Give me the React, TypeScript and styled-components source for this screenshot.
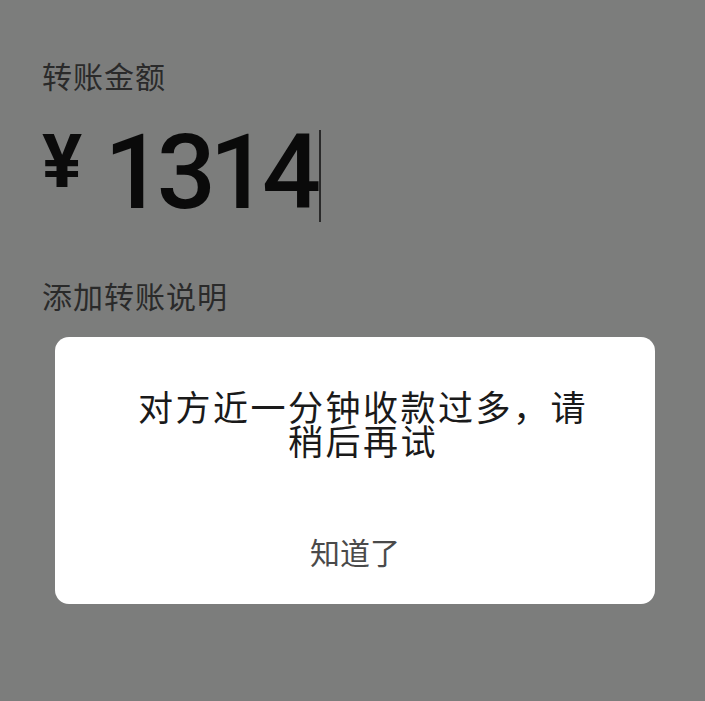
import React from "react";
import styled, { createGlobalStyle } from "styled-components";

const GlobalStyle = createGlobalStyle`
  html, body {
    margin: 0;
    padding: 0;
    background: #f8faf8;
  }
  * { box-sizing: border-box; }
`;

const CJK = `"Noto Sans CJK SC", "Noto Sans", sans-serif`;

const Page = styled.div`
  min-height: 701px;
  padding: 60px 0 0 42px;
  background: #f8faf8;
  font-family: ${CJK};
`;

const Label = styled.div<{ $gap?: number }>`
  font-size: 30px;
  line-height: 30px;
  letter-spacing: 1px;
  color: #555;
  margin-top: ${(p) => p.$gap ?? 0}px;
`;

const AmountRow = styled.div`
  display: flex;
  align-items: flex-start;
  margin-top: 31px;
  height: 104px;
`;

const Yen = styled.span`
  font-family: Roboto, "Liberation Sans", sans-serif;
  font-weight: 700;
  font-size: 75px;
  line-height: 1;
  margin-top: 3px;
  color: #161616;
`;

const Digits = styled.span`
  font-family: Roboto, "Liberation Sans", sans-serif;
  font-weight: 500;
  font-size: 104px;
  line-height: 1;
  letter-spacing: -6.5px;
  margin-left: 22px;
  color: #141414;
`;

const Caret = styled.span`
  display: block;
  width: 2px;
  height: 92px;
  margin-top: 9px;
  margin-left: 4px;
  background: #555;
`;

const Overlay = styled.div`
  position: fixed;
  inset: 0;
  background: rgba(0, 0, 0, 0.5);
  display: flex;
  justify-content: center;
  align-items: flex-start;
  padding: 337px 0 0 5px;
`;

const Dialog = styled.div`
  width: 600px;
  background: #fff;
  border-radius: 14px;
  padding: 52px 64px 0 80px;
  display: flex;
  flex-direction: column;
  align-items: stretch;
  font-family: ${CJK};
`;

const Message = styled.div`
  font-size: 35px;
  line-height: 34px;
  letter-spacing: 2.5px;
  color: #1a1a1a;
  text-align: center;
`;

const ActionButton = styled.button`
  display: block;
  border: 0;
  background: transparent;
  padding: 79px 0 38px;
  margin: 0 -64px 0 -80px;
  font-family: ${CJK};
  font-size: 30px;
  line-height: 30px;
  color: #4a4a4a;
  text-align: center;
  cursor: pointer;
`;

export default function App() {
  return (
    <>
      <GlobalStyle />
      <Page>
        <Label>转账金额</Label>
        <AmountRow>
          <Yen>¥</Yen>
          <Digits>1314</Digits>
          <Caret />
        </AmountRow>
        <Label $gap={55}>添加转账说明</Label>
      </Page>
      <Overlay>
        <Dialog>
          <Message>对方近一分钟收款过多，请稍后再试</Message>
          <ActionButton>知道了</ActionButton>
        </Dialog>
      </Overlay>
    </>
  );
}
